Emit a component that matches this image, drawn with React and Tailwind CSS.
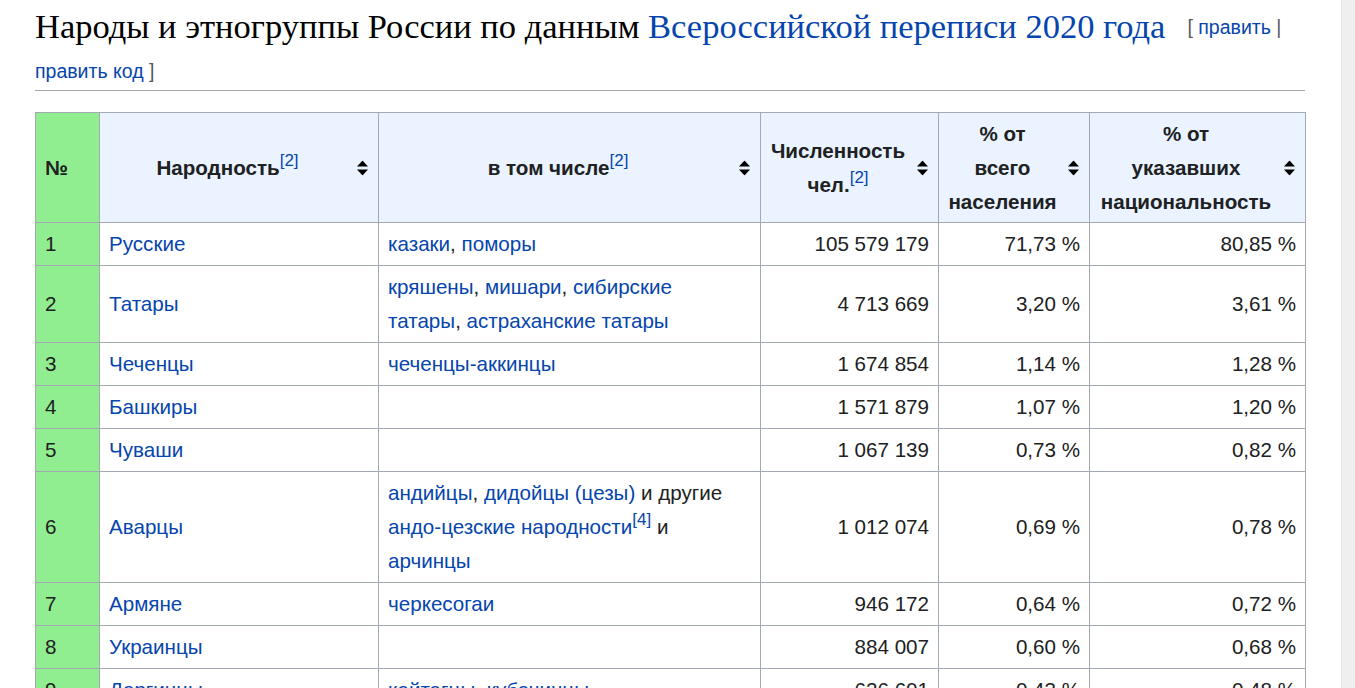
import React from "react";

const L = ({ children }) => <a className="text-[#0645ad]">{children}</a>;
const Ref = ({ n }) => (
  <sup className="text-[17px] leading-none text-[#0645ad] font-normal relative -top-[9px] align-baseline">[{n}]</sup>
);

function SortIcon() {
  return (
    <svg width="11" height="15" viewBox="0 0 11 15" className="absolute right-[10px] top-1/2 -translate-y-1/2">
      <polygon points="5.5,0 11,6 0,6" fill="#000" />
      <polygon points="0,9 11,9 5.5,15" fill="#000" />
    </svg>
  );
}

const rows = [
  ["1", "Русские", <><L>казаки</L>, <L>поморы</L></>, "105 579 179", "71,73 %", "80,85 %"],
  ["2", "Татары", <><L>кряшены</L>, <L>мишари</L>, <L>сибирские</L><br /><L>татары</L>, <L>астраханские татары</L></>, "4 713 669", "3,20 %", "3,61 %"],
  ["3", "Чеченцы", <L>чеченцы-аккинцы</L>, "1 674 854", "1,14 %", "1,28 %"],
  ["4", "Башкиры", null, "1 571 879", "1,07 %", "1,20 %"],
  ["5", "Чуваши", null, "1 067 139", "0,73 %", "0,82 %"],
  ["6", "Аварцы", <><L>андийцы</L>, <L>дидойцы (цезы)</L> и другие<br /><L>андо-цезские народности</L><Ref n="4" /> и<br /><L>арчинцы</L></>, "1 012 074", "0,69 %", "0,78 %"],
  ["7", "Армяне", <L>черкесогаи</L>, "946 172", "0,64 %", "0,72 %"],
  ["8", "Украинцы", null, "884 007", "0,60 %", "0,68 %"],
  ["9", "Даргинцы", <><L>кайтагцы</L>, <L>кубачинцы</L></>, "626 601", "0,43 %", "0,48 %"],
  ["10", "Казахи", null, "590 730", "0,40 %", "0,45 %"],
];

export default function App() {
  const th = "relative border border-[#a2a9b1] bg-[#eaf3ff] font-bold text-center align-middle py-[3.5px] pl-[9px] pr-[32px]";
  const td = "border border-[#a2a9b1] py-[4px] px-[9px] align-middle";
  return (
    <div className="flex h-[688px] overflow-hidden bg-white font-['Liberation_Sans',Arial,sans-serif] text-[#202122]">
      <div className="w-[1341px] pl-[35px]">
        <div className="w-[1270px]">
          <h2 className="font-['Liberation_Serif','Times_New_Roman',serif] text-[34.5px] leading-[46px] text-black pt-[3px] pb-[1px] border-b border-[#a2a9b1]">
            Народы и этногруппы России по данным <a className="text-[#0645ad]">Всероссийской переписи 2020 года</a>
            <span className="ml-[22px] font-['Liberation_Sans',Arial,sans-serif] text-[19.5px] text-[#54595d] align-[4px]">
              [ <a className="text-[#0645ad]">править</a> |
            </span>
            <br />
            <span className="font-['Liberation_Sans',Arial,sans-serif] text-[19.5px] text-[#54595d] leading-[36px] block mt-[3px]">
              <a className="text-[#0645ad]">править код</a> ]
            </span>
          </h2>
          <table className="mt-[21px] w-[1270px] table-fixed border-collapse text-[20.6px] leading-[34px]">
            <colgroup>
              <col className="w-[64px]" />
              <col className="w-[279px]" />
              <col className="w-[382px]" />
              <col className="w-[178px]" />
              <col className="w-[151px]" />
              <col className="w-[216px]" />
            </colgroup>
            <thead>
              <tr>
                <th className="border border-[#a2a9b1] bg-[#90ee90] font-bold text-center align-middle py-[3.5px] pl-[9px] pr-[32px]">№</th>
                <th className={th}>Народность<Ref n="2" /><SortIcon /></th>
                <th className={th}>в том числе<Ref n="2" /><SortIcon /></th>
                <th className={th}>Численность<br />чел.<Ref n="2" /><SortIcon /></th>
                <th className={th}>% от<br />всего<br />населения<SortIcon /></th>
                <th className={th}>% от<br />указавших<br />национальность<SortIcon /></th>
              </tr>
            </thead>
            <tbody>
              {rows.map((r) => (
                <tr key={r[0]}>
                  <td className={td + " bg-[#90ee90]"}>{r[0]}</td>
                  <td className={td}><L>{r[1]}</L></td>
                  <td className={td}>{r[2]}</td>
                  <td className={td + " text-right"}>{r[3]}</td>
                  <td className={td + " text-right"}>{r[4]}</td>
                  <td className={td + " text-right"}>{r[5]}</td>
                </tr>
              ))}
            </tbody>
          </table>
        </div>
      </div>
      <div className="w-[14px] bg-[#efefef] border-l border-[#e6e6e6]" />
    </div>
  );
}
